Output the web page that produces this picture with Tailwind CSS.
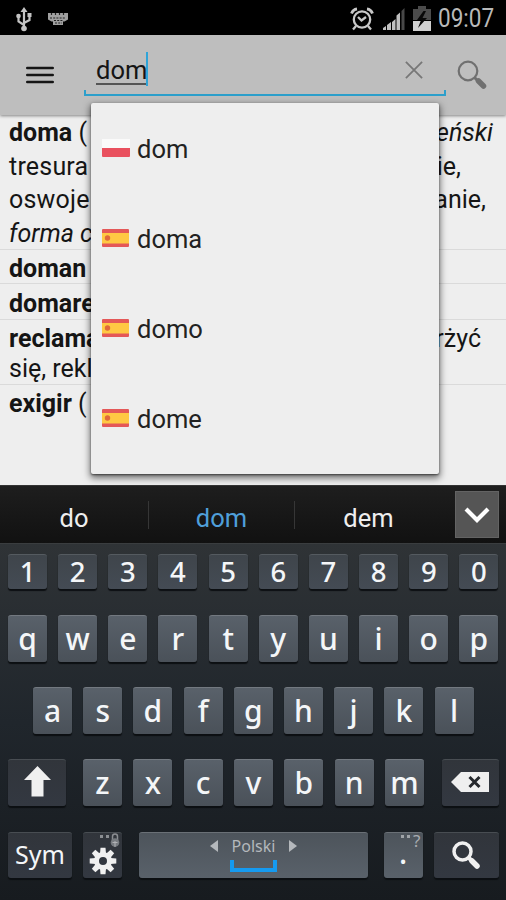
<!DOCTYPE html>
<html lang="pl">
<head>
<meta charset="utf-8">
<title>dom</title>
<script src="https://cdn.jsdelivr.net/npm/@tailwindcss/browser@4"></script>
</head>
<body class="w-[506px] h-[900px] overflow-hidden bg-black font-['Roboto',sans-serif] flex flex-col">
<header class="h-[35px] shrink-0 bg-black flex items-center text-[#b9b9b9]">
  <svg class="ml-[15px] mt-[3px] w-[18px] h-[26px]" viewBox="0 0 18 26" fill="none" stroke="#c4c4c4" stroke-width="2.2"><path d="M9 5v17M9 19L3.500 15.500V10M9 17l5.500-3V9"/><path d="M9 1l3.500 5h-7z" fill="#c4c4c4" stroke="none"/><circle cx="9" cy="22.500" r="2.800" fill="#c4c4c4" stroke="none"/><circle cx="3.500" cy="10" r="2.300" fill="#c4c4c4" stroke="none"/><path d="M12.500 7h4v4h-4z" fill="#c4c4c4" stroke="none"/></svg>
  <svg class="ml-[14px] mt-[2px] w-[22px] h-[14px]" viewBox="0 0 22 14"><path d="M1 1h20v6.500l-3.500 2H16V13H6V9.500H4.500L1 7.500z" fill="#a0a0a0"/><path d="M4.500 1v3M8.500 1v3M12.500 1v3M16.500 1v3M3 6h16M7 8.500h9M8 11h7" stroke="#222" stroke-width="1.200" stroke-dasharray="2 1.200"/></svg>
  <svg class="ml-auto mt-[3px] w-6 h-6" viewBox="0 0 24 24" fill="none" stroke="#c8c8c8" stroke-width="2.300"><circle cx="12" cy="12.500" r="8.200"/><path d="M8 10l3.500 3.500L16 10M6 19l-3 3.500M18 19l3 3.500"/><path d="M1.500 6.500Q3 2.500 7 2M22.500 6.500Q21 2.500 17 2" stroke-width="2.800"/></svg>
  <svg class="ml-[9px] mt-[3px] w-[23px] h-6" viewBox="0 0 23 24"><path d="M0 23v-2l3-2v4zM4 23v-5l4-3v8zM9 23v-8l3.500-3v11zM13.500 23V8.500l3.500-3V23z" fill="#c0c0c0"/><path d="M18.500 23V4l3-3v22z" fill="#484848"/></svg>
  <svg class="ml-[7px] mt-[1px] w-[18px] h-[27px]" viewBox="0 0 18 27"><path d="M0 4h5V1h8v3h5v11H0z" fill="#4b4b4b"/><path d="M0 16h18v10H0z" fill="#d0d0d0"/><path d="M10.500 6L4 15h4l-3 8 9-10H9.500L13 6z" fill="#090909"/></svg>
  <span class="ml-[7px] mr-[12px] mt-[2px] text-[25px] leading-none w-[56px] whitespace-nowrap"><span class="inline-block origin-left scale-x-[.9]">09:07</span></span>
</header>

<main class="relative h-[450px] shrink-0 bg-[#eee] text-[#151515]">
  <div class="h-[80px] bg-[#bebebe] flex items-start shadow-[0_1px_3px_rgba(0,0,0,.45)]">
    <svg class="ml-[26px] mt-[30px] w-7 h-5" viewBox="0 0 28 20" stroke="#151515" stroke-width="2.600" stroke-linecap="round"><path d="M1.300 3h25.400M1.300 10h25.400M1.300 17h25.400"/></svg>
    <div class="ml-[30px] w-[362px] h-[61px] relative flex flex-col justify-end">
      <div class="flex items-center absolute left-[12px] top-[17px]">
        <span class="text-[25.500px] leading-[34px] h-[32px] w-[50px] border-b-2 border-[#555]">dom</span>
        <span class="w-[2px] h-[34px] bg-[#2fa4d8]"></span>
      </div>
      <svg class="absolute left-[321px] top-[26px] w-[18px] h-[18px]" viewBox="0 0 20 20" stroke="#777" stroke-width="2"><path d="M1 1l18 18M19 1L1 19"/></svg>
      <div class="h-[6px] border-x-2 border-b-2 border-[#2c9fcb]"></div>
    </div>
    <svg class="ml-[11px] mt-[24px] w-[30px] h-[30px]" viewBox="0 0 30 30" fill="none" stroke="#707070"><circle cx="11" cy="12" r="9.300" stroke-width="2.200"/><path d="M17.500 18.500l4 4" stroke-width="3"/><path d="M21.500 22l5 5" stroke-width="5.500" stroke-linecap="round"/></svg>
  </div>
  <div class="text-[25px] whitespace-nowrap">
    <div class="h-[135px] border-b border-[#dadada] pl-[9px] pt-[1px] leading-[33.700px]">
      <div class="flex justify-between pr-[13px]"><span><b>doma</b> (</span><i>eński</i></div>
      <div class="flex justify-between pr-[45px]"><span class="tracking-[0.200px]">tresura</span><span>ie,</span></div>
      <div class="flex justify-between pr-[20px]"><span class="tracking-[0.200px]">oswoje</span><span>anie,</span></div>
      <i>forma c</i>
    </div>
    <div class="h-[34px] border-b border-[#dadada] pl-[9px] leading-[38px] font-bold overflow-hidden">doman</div>
    <div class="h-[36px] border-b border-[#dadada] pl-[9px] leading-[39px] font-bold overflow-hidden">domare</div>
    <div class="h-[65px] border-b border-[#dadada] pl-[9px] pt-[4px] leading-[30px]">
      <div class="flex justify-between pr-[25px]"><b>reclama</b><span>rżyć</span></div>
      <div>się, rekl</div>
    </div>
    <div class="pl-[9px] leading-[38px]"><b>exigir</b> (</div>
  </div>
  <div class="absolute left-[91px] top-[68px] w-[348px] h-[371px] bg-[#eee] rounded-[2px] shadow-[0_3px_7px_1px_rgba(0,0,0,.55),0_1px_2px_rgba(0,0,0,.5)] flex flex-col text-[25.500px] text-[#222]">
    <div class="h-[90px] flex items-center pl-[11px] gap-[7px]"><svg class="w-7 h-5" viewBox="0 0 28 20"><path d="M0 1h28v9H0z" fill="#fafafa"/><path d="M0 10h28v8q0 1-1 1H1q-1 0-1-1z" fill="#e9505e"/></svg><span class="pt-[3px]">dom</span></div>
    <div class="h-[90px] flex items-center pl-[11px] gap-[8px]"><svg class="w-[27px] h-5" viewBox="0 0 27 20"><rect y="1" width="27" height="18" rx="1" fill="#e45858"/><path d="M0 5h27v10.500H0z" fill="#ffc843"/><circle cx="5.500" cy="10" r="2.700" fill="#e0683c"/></svg><span class="pt-[3px]">doma</span></div>
    <div class="h-[90px] flex items-center pl-[11px] gap-[8px]"><svg class="w-[27px] h-5" viewBox="0 0 27 20"><rect y="1" width="27" height="18" rx="1" fill="#e45858"/><path d="M0 5h27v10.500H0z" fill="#ffc843"/><circle cx="5.500" cy="10" r="2.700" fill="#e0683c"/></svg><span class="pt-[3px]">domo</span></div>
    <div class="h-[90px] flex items-center pl-[11px] gap-[8px]"><svg class="w-[27px] h-5" viewBox="0 0 27 20"><rect y="1" width="27" height="18" rx="1" fill="#e45858"/><path d="M0 5h27v10.500H0z" fill="#ffc843"/><circle cx="5.500" cy="10" r="2.700" fill="#e0683c"/></svg><span class="pt-[3px]">dome</span></div>
  </div>
</main>

<div class="relative z-10 h-[58px] shrink-0 bg-linear-to-b from-[#1e1e1e] to-[#111] border-t border-[#333] flex items-center text-[25.500px] text-[#eee]">
  <div class="w-[148px] pt-[7px] text-center">do</div>
  <div class="w-px h-7 bg-[#363636]"></div>
  <div class="w-[145px] pt-[7px] text-center text-[#4f9fda]">dom</div>
  <div class="w-px h-7 bg-[#363636]"></div>
  <div class="w-[147px] pt-[7px] text-center">dem</div>
  <div class="ml-[13px] w-[44px] h-[47px] bg-[#555] border border-[#636363] flex items-center justify-center"><svg class="w-[26px] h-[18px]" viewBox="0 0 26 18" fill="none" stroke="#fff" stroke-width="4.200"><path d="M2 3l11 11L24 3"/></svg></div>
</div>

<section id="kb" class="h-[357px] shrink-0 bg-linear-to-b from-[#2f3336] via-[#20262c] to-[#171b1f] pt-[10px] pl-[8px] pr-[7.500px] flex flex-col font-['Noto_Sans',sans-serif] font-medium text-[30px] text-[#f4f6f8] border-t border-[#3a3d3f]">
  <div class="flex justify-between h-[35px] text-[27.500px]" data-keys="1234567890" data-k="w-[39px] h-[35px] rounded-[3px] bg-linear-to-b from-[#3f454b] to-[#444b54] border-t border-[#555b60] shadow-[0_2px_1px_#0c0f12] flex items-center justify-center leading-none pb-[1px]"></div>
  <div class="mt-[26px] flex justify-between h-[47px]" data-keys="qwertyuiop"></div>
  <div class="mt-[25px] pl-[25px] pr-[25px] flex justify-between h-[47px]" data-keys="asdfghjkl"></div>
  <div class="mt-[25px] flex h-[47px]">
    <div class="w-[58px] h-[47px] rounded-[3px] bg-linear-to-b from-[#31353b] to-[#333841] border-t border-[#484d52] shadow-[0_2px_1px_#0c0f12] flex items-center justify-center pb-[3px]"><svg class="w-[27px] h-[31px]" viewBox="0 0 27 31"><path d="M13.500 0L27 14h-7.500v16.500h-12V14H0z" fill="#f0f0f0"/></svg></div>
    <div class="ml-[17px] w-[341px] flex justify-between" data-keys="zxcvbnm"></div>
    <div class="ml-auto w-[57px] h-[47px] rounded-[3px] bg-linear-to-b from-[#31353b] to-[#333841] border-t border-[#484d52] shadow-[0_2px_1px_#0c0f12] flex items-center justify-center"><svg class="w-[38px] h-5 -mt-[2px]" viewBox="0 0 38 20"><path d="M0 10L10 0h28v20H10z" fill="#efefef"/><path d="M18.500 5l10 10M28.500 5l-10 10" stroke="#25282c" stroke-width="3"/></svg></div>
  </div>
  <div class="mt-[26px] flex h-[47px]">
    <div class="w-[64px] h-[46px] rounded-[3px] bg-linear-to-b from-[#31353b] to-[#333841] border-t border-[#484d52] shadow-[0_2px_1px_#0c0f12] flex items-center justify-center text-[25px] font-normal pb-[2px]">Sym</div>
    <div class="ml-[11px] w-[39px] h-[46px] relative rounded-[3px] bg-linear-to-b from-[#31353b] to-[#333841] border-t border-[#484d52] shadow-[0_2px_1px_#0c0f12]">
      <svg class="absolute left-[17px] top-0 w-5 h-4" viewBox="0 0 20 16"><path d="M0 2h3v3H0zM6 2h3v3H6z" fill="#8b8e92"/><rect x="12.500" y="1" width="5" height="8" rx="2.500" fill="none" stroke="#8b8e92" stroke-width="1.500"/><circle cx="15" cy="9.500" r="4.300" fill="#777b80"/><path d="M15 8v6M12.500 9.500h5" stroke="#b0b2b5"/></svg>
      <svg class="absolute left-[6px] top-[14px] w-7 h-7" viewBox="-14 -14 28 28"><g fill="#f0f0f0"><path d="M-2.500-13.300h5l.5 6h-6z"/><path transform="rotate(45)" d="M-2.500-13.300h5l.5 6h-6z"/><path transform="rotate(90)" d="M-2.500-13.300h5l.5 6h-6z"/><path transform="rotate(135)" d="M-2.500-13.300h5l.5 6h-6z"/><path transform="rotate(180)" d="M-2.500-13.300h5l.5 6h-6z"/><path transform="rotate(225)" d="M-2.500-13.300h5l.5 6h-6z"/><path transform="rotate(270)" d="M-2.500-13.300h5l.5 6h-6z"/><path transform="rotate(315)" d="M-2.500-13.300h5l.5 6h-6z"/></g><circle r="6.500" fill="none" stroke="#f0f0f0" stroke-width="5"/></svg>
    </div>
    <div class="ml-[17px] w-[229px] h-[46px] rounded-[3px] bg-linear-to-b from-[#4d545b] to-[#59616a] border-t border-[#6a7076] shadow-[0_2px_1px_#0c0f12] flex flex-col items-center">
      <div class="mt-[3px] h-5 flex items-center gap-[13px] text-[16px] leading-5 font-normal text-[#b4b8bc]"><svg class="w-2 h-3" viewBox="0 0 8 12"><path d="M8 0v12L0 6z" fill="#b4b8bc"/></svg><span class="w-[45px] text-center">Polski</span><svg class="w-2 h-3" viewBox="0 0 8 12"><path d="M0 0v12l8-6z" fill="#b4b8bc"/></svg></div>
      <div class="mt-[4px] w-[47px] h-[12px] border-4 border-t-0 border-[#159af0]"></div>
    </div>
    <div class="ml-[16px] w-[39px] h-[46px] relative rounded-[3px] bg-linear-to-b from-[#4d545b] to-[#59616a] border-t border-[#6a7076] shadow-[0_2px_1px_#0c0f12]">
      <svg class="absolute left-[17px] top-[2px] w-[10px] h-[3px]" viewBox="0 0 10 3"><path d="M0 0h3v3H0zM6 0h3v3H6z" fill="#a0a4a8"/></svg>
      <span class="absolute left-[29px] top-[-1px] text-[17px] leading-[18px] font-normal text-[#a8acb0]">?</span>
      <span class="absolute left-[15px] top-[4px] leading-[32px]">.</span>
    </div>
    <div class="ml-auto w-[65px] h-[46px] rounded-[3px] bg-linear-to-b from-[#31353b] to-[#333841] border-t border-[#484d52] shadow-[0_2px_1px_#0c0f12] flex items-center justify-center pb-[1px]"><svg class="w-7 h-7" viewBox="0 0 28 28" fill="none" stroke="#f0f0f0"><circle cx="10.500" cy="10.500" r="8.500" stroke-width="3.500"/><path d="M16.500 16.500l4 4" stroke-width="4"/><path d="M20 20l5 5" stroke-width="5.500" stroke-linecap="round"/></svg></div>
  </div>
</section>
<script>
const letterKey = "w-[39px] h-[47px] shrink-0 rounded-[3px] bg-linear-to-b from-[#59616a] to-[#4a5159] border-t border-[#737980] shadow-[0_2px_1px_#0c0f12] flex items-center justify-center leading-none";
document.querySelectorAll('[data-keys]').forEach(row => {
  for (const c of row.dataset.keys) {
    const key = document.createElement('div');
    key.className = row.dataset.k || letterKey;
    key.textContent = c;
    row.append(key);
  }
});
</script>
</body>
</html>
